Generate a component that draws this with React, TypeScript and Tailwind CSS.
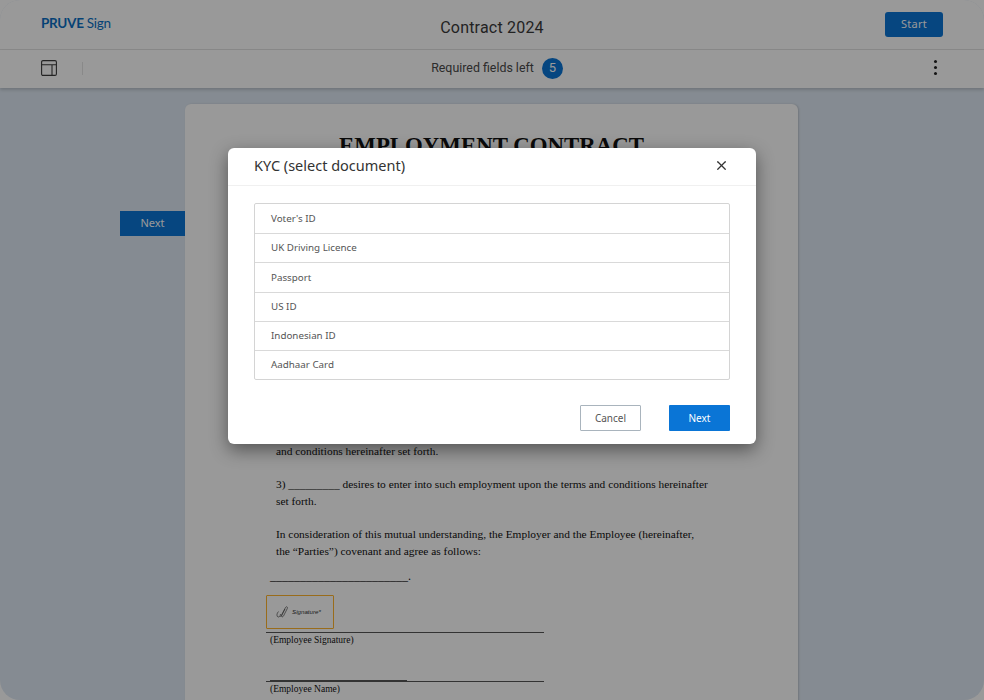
import { X } from "lucide-react"

const docs = ["Voter's ID", "UK Driving Licence", "Passport", "US ID", "Indonesian ID", "Aadhaar Card"]

const LayoutIcon = () => (
  <svg width="16" height="16" viewBox="0 0 16 16" fill="none" stroke="#3c3c3c" strokeWidth="1.1">
    <rect x="0.6" y="0.6" width="14.8" height="14.8" rx="1.4" />
    <path d="M0.6 4.8H15.4M11 4.8V15.400" />
  </svg>
)

const SignIcon = () => (
  <svg width="13" height="14" viewBox="0 0 13 14" fill="none" stroke="#333" strokeWidth="0.6">
    <path d="M2.500 6.500c-2 2-2 5-.500 5.500s2.500-1.500 2.500-3M4.500 12l5-9.500c1-1.500 2.500-.500 1.800 1L7.500 11c-.800 1.300-2.300 1-1.800-.500L9 4" />
  </svg>
)

const App = () => {
  return (
    <div className="relative w-[984px] h-[700px] overflow-hidden bg-white font-['Noto_Sans',sans-serif]">
      <div className="h-[700px] rounded-[20px] overflow-hidden bg-[#dee8f3] flex flex-col">
        <div className="h-[50px] shrink-0 bg-white border-b border-[#e4e4e4] flex items-center justify-between pl-[41px] pr-[41px]">
          <div className="w-[120px] text-[13.5px] text-[#0a6fc4] tracking-[-0.3px] font-['Lato',sans-serif] -mt-[3px]">
            <span className="font-bold">PRUVE</span> <span>Sign</span>
          </div>
          <div className="font-['Roboto',sans-serif] text-[16px] text-[#3a3a3a] tracking-[0.2px] mt-[6px]">Contract 2024</div>
          <div className="w-[120px] flex justify-end -mt-[1px]">
            <button className="w-[58px] h-[25px] rounded-[3px] bg-[#0a75d6] text-white text-[11px] tracking-[0.3px]">Start</button>
          </div>
        </div>
        <div className="h-[38px] shrink-0 bg-white flex items-center justify-between pl-[41px] pr-[47px] shadow-[0_2px_3px_rgba(0,0,0,0.16)] relative">
          <div className="w-[120px] flex items-center gap-[25px] -mt-[2px]">
            <LayoutIcon />
            <div className="w-px h-[13px] bg-[#e4e4e4]" />
          </div>
          <div className="flex items-center gap-2 ml-[16px] -mt-[2px] font-['Roboto',sans-serif] text-[12.4px] text-[#4a4a4a]">
            <span>Required fields left</span>
            <span className="w-[21px] h-[21px] rounded-full bg-[#0a75d6] text-white text-[13px] flex items-center justify-center">5</span>
          </div>
          <div className="w-[120px] flex justify-end -mt-[3px]">
            <div className="flex flex-col gap-[3px]">
              <span className="w-[3px] h-[3px] rounded-full bg-[#222]" />
              <span className="w-[3px] h-[3px] rounded-full bg-[#222]" />
              <span className="w-[3px] h-[3px] rounded-full bg-[#222]" />
            </div>
          </div>
        </div>
        <div className="flex-1 flex pl-[120px] pt-[16px] items-start">
          <button className="mt-[107px] w-[65px] h-[25px] shrink-0 bg-[#0a75d6] text-white text-[11px]">Next</button>
          <div className="w-[613px] h-[620px] bg-white rounded-t-[6px] shadow-[1px_0_2px_rgba(0,0,0,0.15)] font-['Liberation_Serif',serif] text-[11.4px] leading-[17.5px] text-[#111]">
            <h1 className="mt-[28px] text-center font-bold text-[22.85px] leading-[28px]">EMPLOYMENT CONTRACT</h1>
            <div className="mt-[283px] pl-[91px] pr-[88px]">
              <p>and conditions hereinafter set forth.</p>
              <p className="mt-[15px]">3) _________ desires to enter into such employment upon the terms and conditions hereinafter set forth.</p>
              <p className="mt-[15px]">In consideration of this mutual understanding, the Employer and the Employee (hereinafter, the “Parties”) covenant and agree as follows:</p>
            </div>
            <div className="pl-[85px] mt-[6px] text-[12px] leading-[18px]">_______________________.</div>
            <div className="ml-[81px] mt-[10px] w-[278px] text-[9.500px] leading-[12px]">
              <div className="w-[68px] h-[34px] border border-[#ffb42e] rounded-[1px] flex items-center gap-[3px] pl-[9px]">
                <SignIcon />
                <span className="font-['Liberation_Sans',sans-serif] italic text-[6.200px] text-[#333]">Signature*</span>
              </div>
              <div className="mt-[3px] border-t border-[#555] pl-[4px] pt-px">(Employee Signature)</div>
              <div className="mt-[34px] ml-[4px] w-[137px] h-px bg-[#555]" />
              <div className="border-t border-[#555] pl-[4px] pt-px">(Employee Name)</div>
            </div>
          </div>
        </div>
      </div>

      <div className="absolute inset-0 bg-black/40" />

      <div className="absolute left-[228px] top-[148px] w-[528px] h-[296px] bg-white rounded-[6px] shadow-[0_6px_18px_rgba(0,0,0,0.45)]">
        <div className="h-[38px] border-b border-[#f0f0f0] flex items-center justify-between pl-[26px] pr-[27px] pb-[2px]">
          <span className="text-[14.5px] text-[#333]">KYC (select document)</span>
          <X size={15} strokeWidth={2} color="#333" />
        </div>
        <div className="px-[26px] pt-[17px]">
          <div className="border border-[#d4d4d4] rounded-[2px]">
            {docs.map((d, i) => (
              <div key={d} className={"h-[29.2px] flex items-center pl-[16px] pt-px text-[9.8px] text-[#555] " + (i > 0 ? "border-t border-[#d9d9d9]" : "")}>
                {d}
              </div>
            ))}
          </div>
          <div className="flex justify-end gap-[28px] mt-[25px]">
            <button className="w-[61px] h-[26px] border border-[#a9b4bd] rounded-[1px] text-[10px] text-[#555]">Cancel</button>
            <button className="w-[61px] h-[26px] bg-[#0a75d6] rounded-[1px] text-[10px] text-white">Next</button>
          </div>
        </div>
      </div>
    </div>
  )
}
export default App
